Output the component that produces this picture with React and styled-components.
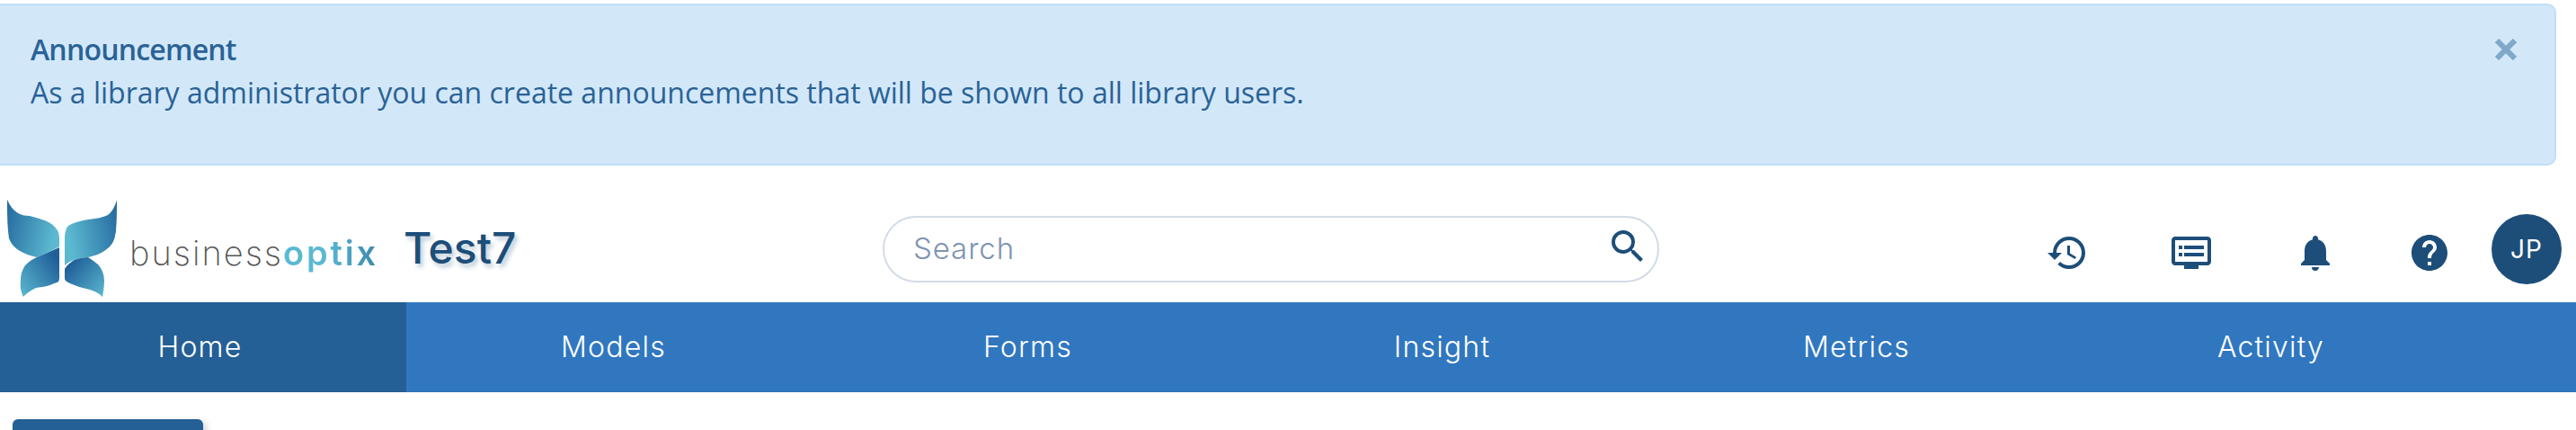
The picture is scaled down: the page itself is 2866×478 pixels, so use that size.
import React from 'react';
import styled, { createGlobalStyle } from 'styled-components';
import { MdHistory, MdDvr, MdNotifications, MdHelp, MdSearch } from 'react-icons/md';

const GlobalStyle = createGlobalStyle`
  html, body {
    margin: 0;
    padding: 0;
    background: #fff;
    overflow: hidden;
  }
`;

const Page = styled.div`
  width: 2866px;
  height: 478px;
  overflow: hidden;
  padding-top: 4px;
  box-sizing: border-box;
`;

const Alert = styled.div`
  box-sizing: border-box;
  height: 180px;
  width: 2844px;
  background: #d2e8f9;
  border: 2px solid #bedff8;
  border-left: none;
  border-radius: 0 10px 10px 0;
  padding: 25px 42px 0 34px;
  display: flex;
  justify-content: space-between;
  color: #2a6296;
  font-family: "Open Sans", sans-serif;
`;

const AlertTitle = styled.div`
  font-size: 32px;
  line-height: 48px;
  font-weight: 600;
  letter-spacing: -0.8px;
`;

const AlertBody = styled.div`
  font-size: 32px;
  line-height: 48px;
  font-weight: 400;
`;

const CloseButton = styled.svg`
  width: 24px;
  height: 24px;
  margin-top: 12px;
  stroke: #7fa8c9;
  stroke-width: 6;
`;

const Header = styled.div`
  box-sizing: border-box;
  height: 152px;
  padding-top: 34px;
  display: flex;
  align-items: center;
`;

const Brand = styled.div`
  display: flex;
  align-items: center;
  width: 982px;
  padding-left: 8px;
  box-sizing: border-box;
`;

const LogoMark = styled.svg`
  width: 124px;
  height: 108px;
  margin-top: -2px;
  flex-shrink: 0;
`;

const WordMark = styled.div`
  font-family: "Inter", sans-serif;
  font-size: 38px;
  font-weight: 200;
  letter-spacing: 2px;
  color: #555;
  margin-left: 12px;
  margin-top: 8px;
  width: 305px;
  flex-shrink: 0;
`;

const WordMarkAccent = styled.span`
  font-weight: 600;
  letter-spacing: 2.8px;
  background: linear-gradient(90deg, #5ab9d2 45%, #3b86ad 100%);
  -webkit-background-clip: text;
  background-clip: text;
  color: transparent;
`;

const Tenant = styled.div`
  font-family: "Inter", sans-serif;
  font-size: 48px;
  font-weight: 500;
  margin-top: -3px;
  color: #1d4e79;
  text-shadow: 3px 4px 5px rgba(29, 78, 121, 0.3);
`;

const SearchBox = styled.div`
  box-sizing: border-box;
  width: 864px;
  height: 74px;
  border: 2px solid #d3dbe6;
  border-radius: 37px;
  padding: 0 9px 3px 32px;
  display: flex;
  align-items: center;
  justify-content: space-between;
  font-family: "Inter", sans-serif;
  font-size: 33px;
  font-weight: 300;
  letter-spacing: 0.9px;
  color: #7d93b2;
`;

const SearchIcon = styled(MdSearch)`
  color: #1d4e79;
  font-size: 48px;
  margin-top: -4px;
`;

const Actions = styled.div`
  margin-left: auto;
  display: flex;
  align-items: center;
  padding-right: 16px;
`;

const ActionIcon = styled.div`
  width: 138px;
  margin-left: ${p => (p.$tight ? -11 : 0)}px;
  margin-top: 8px;
  display: flex;
  justify-content: center;
  color: #1d4e79;
  font-size: 48px;
`;

const Avatar = styled.div`
  width: 78px;
  height: 78px;
  border-radius: 50%;
  background: #1d4e79;
  color: #fff;
  display: flex;
  align-items: center;
  justify-content: center;
  font-family: "Inter", sans-serif;
  font-size: 28px;
  font-weight: 400;
  letter-spacing: 1px;
`;

const Nav = styled.div`
  height: 100px;
  background: #3077bf;
  display: flex;
`;

const NavItem = styled.div`
  box-sizing: border-box;
  width: ${p => (p.$active ? 452 : 461)}px;
  padding: 0 ${p => (p.$active ? 7 : 0)}px 2px 0;
  background: ${p => (p.$active ? '#245f96' : 'transparent')};
  display: flex;
  align-items: center;
  justify-content: center;
  color: #fff;
  font-family: "Inter", sans-serif;
  font-size: 32px;
  font-weight: 300;
  letter-spacing: 1.2px;
`;

const Toolbar = styled.div`
  padding: 30px 0 0 14px;
`;

const PrimaryButton = styled.div`
  width: 212px;
  height: 60px;
  background: #245f96;
  border-radius: 6px;
  box-shadow: 3px 3px 8px rgba(0, 0, 0, 0.2);
`;

const Butterfly = () => (
  <LogoMark viewBox="0 0 124 108">
    <defs>
      <linearGradient id="lt" x1="0" y1="0" x2="1" y2="0.25">
        <stop offset="0" stopColor="#24699f" />
        <stop offset="1" stopColor="#5cb9d0" />
      </linearGradient>
      <linearGradient id="rt" x1="1" y1="0" x2="0" y2="0.25">
        <stop offset="0" stopColor="#24699f" />
        <stop offset="1" stopColor="#5cb9d0" />
      </linearGradient>
      <linearGradient id="lb" x1="1" y1="0.1" x2="0" y2="1">
        <stop offset="0.1" stopColor="#1f5f99" />
        <stop offset="1" stopColor="#5cb9d0" />
      </linearGradient>
      <linearGradient id="rb" x1="0" y1="0.1" x2="1" y2="1">
        <stop offset="0.1" stopColor="#1f5f99" />
        <stop offset="1" stopColor="#5cb9d0" />
      </linearGradient>
    </defs>
    <path d="M0 0 C6 14 15 18 25 18 C40 22 58 26 58 43 L58 52 C50 57 42 60 33 64 C20 61 6 55 2 43 C0 30 0 14 0 0 Z" fill="url(#lt)" />
    <path d="M58 53 L58 87 C58 91 56 92 55 92 C46 96 40 97 32 98 C26 101 21 104 18 108 C15 102 14 96 15 90 C15 82 17 78 20 73 C24 69 28 66 33 64 C42 60 50 57 58 53 Z" fill="url(#lb)" />
    <path d="M122 0 C120 8 116 14 112 17 C104 21 95 21 85 23 C76 25 70 27 67 30 C65 33 64 38 64 43 L64 73 C67 70 71 68 75 67 C80 65 85 64 90 64 C98 62 104 60 108 57 C116 52 119 46 120 40 C122 32 122 14 122 0 Z" fill="url(#rt)" />
    <path d="M64 77 C67 72 71 69 75 67 C80 65 85 64 90 64 C96 68 100 71 102 73 C106 78 108 84 108 90 C108 96 107 102 106 108 C102 104 98 102 92 100 C84 98 76 96 70 93 C66 91 64 90 64 88 Z" fill="url(#rb)" />
  </LogoMark>
);

export default function App() {
  return (
    <Page>
      <GlobalStyle />
      <Alert>
        <div>
          <AlertTitle>Announcement</AlertTitle>
          <AlertBody>As a library administrator you can create announcements that will be shown to all library users.</AlertBody>
        </div>
        <CloseButton viewBox="0 0 24 24">
          <line x1="2" y1="2" x2="22" y2="22" />
          <line x1="22" y1="2" x2="2" y2="22" />
        </CloseButton>
      </Alert>
      <Header>
        <Brand>
          <Butterfly />
          <WordMark>business<WordMarkAccent>optix</WordMarkAccent></WordMark>
          <Tenant>Test7</Tenant>
        </Brand>
        <SearchBox>
          Search
          <SearchIcon />
        </SearchBox>
        <Actions>
          <ActionIcon><MdHistory /></ActionIcon>
          <ActionIcon><MdDvr /></ActionIcon>
          <ActionIcon><MdNotifications /></ActionIcon>
          <ActionIcon $tight><MdHelp /></ActionIcon>
          <Avatar>JP</Avatar>
        </Actions>
      </Header>
      <Nav>
        <NavItem $active>Home</NavItem>
        <NavItem>Models</NavItem>
        <NavItem>Forms</NavItem>
        <NavItem>Insight</NavItem>
        <NavItem>Metrics</NavItem>
        <NavItem>Activity</NavItem>
      </Nav>
      <Toolbar>
        <PrimaryButton />
      </Toolbar>
    </Page>
  );
}
